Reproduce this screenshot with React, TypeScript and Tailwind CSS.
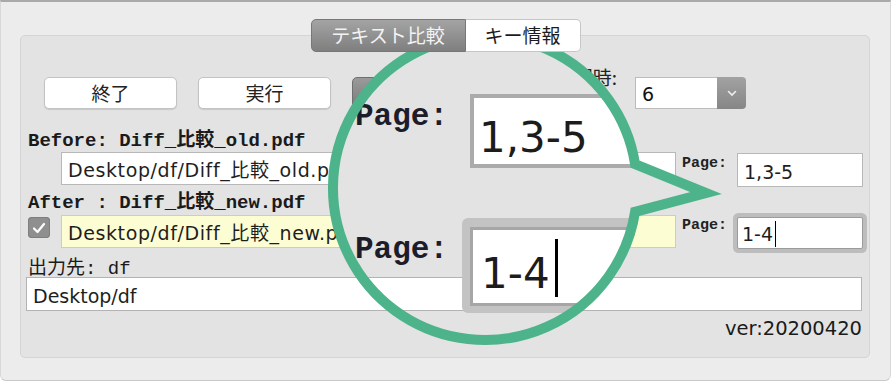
import React from 'react';

const sans = "font-['DejaVu_Sans','Noto_Sans_CJK_JP',sans-serif]";
const mono = "font-['Liberation_Mono','Noto_Sans_CJK_JP',monospace]";
const cjk = "font-['Noto_Sans_CJK_JP',sans-serif]";

const GREEN = '#4db38a';

const Button: React.FC<{ label?: string; dark?: boolean }> = ({ label, dark }) => (
  <div
    className={
      dark
        ? 'h-[32px] w-[133px] rounded-[5px] border border-[#6f6f6f] bg-gradient-to-b from-[#9a9a9a] to-[#7a7a7a]'
        : `flex h-[32px] w-[133px] items-center justify-center rounded-[5px] border border-[#c3c3c3] bg-white text-[19px] text-[#222] shadow-[0_1px_1px_rgba(0,0,0,0.12)] ${cjk}`
    }
  >
    {label}
  </div>
);

const Checkbox: React.FC = () => (
  <div className="mt-[2px] flex h-[21px] w-[22px] shrink-0 items-center justify-center rounded-[4px] bg-[#8f8f8f] shadow-[inset_0_0_0_1px_#7e7e7e]">
    <svg width="14" height="12" viewBox="0 0 14 12">
      <path d="M2 6.5 L5.5 10 L12 2" fill="none" stroke="white" strokeWidth="2.2" strokeLinecap="round" strokeLinejoin="round" />
    </svg>
  </div>
);

const PageLabel: React.FC<{ top: string }> = ({ top }) => (
  <div className={`ml-[6px] ${top} text-[15px] leading-[15px] font-bold text-[#222] ${mono}`}>Page:</div>
);

export default function App() {
  return (
    <div className="relative h-[383px] w-[891px] overflow-hidden bg-white">
      <div className="flex h-[381px] flex-col rounded-b-[6px] border-x border-b border-t-2 border-x-[#d8d8d8] border-b-[#c9c9c9] border-t-[#a9a9a9] bg-[#ececec]">
        {/* tabs */}
        <div className="relative z-10 mt-[17px] flex justify-center">
          <div className={`flex h-[33px] text-[19px] ${cjk}`}>
            <div className="flex w-[155px] items-center justify-center rounded-l-[5px] border border-[#777] bg-gradient-to-b from-[#a4a4a4] to-[#7f7f7f] text-[#f3f3f3]">
              テキスト比較
            </div>
            <div className="flex w-[115px] items-center justify-center rounded-r-[5px] border border-l-0 border-[#c6c6c6] bg-white text-[#1c1c1c]">
              キー情報
            </div>
          </div>
        </div>

        {/* group box */}
        <div className="ml-[19px] mt-[-17px] flex h-[323px] w-[850px] flex-col rounded-[5px] border border-[#d4d4d4] bg-[#e3e3e3]">
          <div className="mt-[41px] flex h-[32px] items-start pl-[23px] pr-[123px]">
            <div className="flex gap-[21px]">
              <Button label="終了" />
              <Button label="実行" />
              <Button dark />
            </div>
            <div className="ml-auto flex items-start">
              <div className={`mr-[18px] mt-[-10px] text-[19px] leading-[19px] text-[#222] ${cjk}`}>処理時:</div>
              <div className="flex h-[32px] w-[111px]">
                <div className={`flex w-[82px] items-center border border-r-0 border-[#bcbcbc] bg-white pl-[6px] pt-[3px] text-[19px] text-[#111] ${sans}`}>
                  6
                </div>
                <div className="flex w-[29px] items-center justify-center rounded-r-[4px] bg-gradient-to-b from-[#a2a2a2] to-[#868686]">
                  <svg width="10" height="7" viewBox="0 0 10 7">
                    <path d="M1.5 1.5 L5 5 L8.5 1.5" fill="none" stroke="#eee" strokeWidth="1.6" strokeLinecap="round" />
                  </svg>
                </div>
              </div>
            </div>
          </div>

          <div className={`mt-[23px] h-[20px] whitespace-nowrap pl-[7px] text-[19px] leading-[19px] font-bold text-[#1a1a1a] ${mono}`}>
            Before: Diff_比較_old.pdf
          </div>

          <div className="flex h-[35px] items-start pl-[40px]">
            <div className={`flex h-[33px] w-[615px] items-center overflow-hidden whitespace-nowrap border border-[#b8b8b8] bg-white pl-[6px] pt-[4px] text-[19px] tracking-[0.6px] text-[#1e1e1e] ${sans}`}>
              Desktop/df/Diff_比較_old.pdf
            </div>
            <PageLabel top="mt-[4px]" />
            <div className={`ml-[10px] mt-[1px] flex h-[34px] w-[126px] items-center border border-[#b8b8b8] bg-white pl-[6px] pt-[4px] text-[19px] text-[#1e1e1e] ${sans}`}>
              1,3-5
            </div>
          </div>

          <div className={`mt-[7px] h-[20px] whitespace-nowrap pl-[7px] text-[19px] leading-[19px] font-bold text-[#1a1a1a] ${mono}`}>
            After : Diff_比較_new.pdf
          </div>

          <div className="mt-[1px] flex h-[34px] items-start pl-[7px]">
            <Checkbox />
            <div className={`ml-[11px] flex h-[33px] w-[615px] items-center overflow-hidden whitespace-nowrap border border-[#cfcfb8] bg-[#fdfdd4] pl-[6px] pt-[4px] text-[19px] tracking-[0.6px] text-[#1e1e1e] ${sans}`}>
              Desktop/df/Diff_比較_new.pdf
            </div>
            <PageLabel top="mt-[3px]" />
            <div className={`ml-[10px] mt-[2px] flex h-[32px] w-[126px] items-center rounded-[2px] border border-[#9c9c9c] bg-white pl-[4px] pt-[2px] text-[19px] text-[#1e1e1e] shadow-[0_0_0_4px_#bdbdbd] ${sans}`}>
              1-4
              <span className="ml-[2px] inline-block h-[26px] w-[1px] bg-black" />
            </div>
          </div>

          <div className="mt-[7px] h-[20px] whitespace-nowrap pl-[7px] text-[19px] leading-[19px] text-[#1a1a1a]">
            <span className={cjk}>出力先</span>
            <span className={mono}>: df</span>
          </div>

          <div className={`ml-[5px] mt-[1px] flex h-[34px] w-[836px] items-center border border-[#b3b3b3] bg-white pl-[6px] pt-[5px] text-[19px] text-[#1e1e1e] ${sans}`}>
            Desktop/df
          </div>

          <div className={`mt-[8px] pr-[7px] text-right text-[19.5px] leading-[20px] text-[#1a1a1a] ${sans}`}>ver:20200420</div>
        </div>
      </div>

      {/* magnifier callout: tail fill */}
      <svg className="pointer-events-none absolute left-0 top-0" width="891" height="383">
        <polygon points="620,158 706,193 620,218" fill="#e3e3e3" />
      </svg>

      {/* magnified content */}
      <div className="pointer-events-none absolute left-[333px] top-[36px] h-[304px] w-[304px] overflow-hidden rounded-full">
        <div className="absolute inset-x-0 top-0 h-[239px] bg-[#e3e3e3]" />
        <div className={`absolute left-[22px] top-[65px] text-[31px] leading-[31px] font-bold text-[#1c1c2a] ${mono}`}>Page:</div>
        <div className="absolute left-[137px] top-[58px] h-[74px] w-[300px] border-[4px] border-[#ababab] bg-white" />
        <div className={`absolute left-[146px] top-[80px] text-[42px] leading-[43px] text-[#1c1c1c] ${sans}`}>1,3-5</div>
        <div className={`absolute left-[22px] top-[198px] text-[31px] leading-[31px] font-bold text-[#1c1c2a] ${mono}`}>Page:</div>
        <div className="absolute left-[129px] top-[182px] h-[95px] w-[300px] rounded-[6px] bg-[#c3c3c3] pl-[8px] pt-[9px]">
          <div className="h-[79px] w-[300px] border-[3px] border-[#a6a6a6] bg-white" />
        </div>
        <div className={`absolute left-[148px] top-[216px] text-[42px] leading-[43px] text-[#1c1c1c] ${sans}`}>1-4</div>
        <div className="absolute left-[222px] top-[203px] h-[58px] w-[3px] bg-black" />
      </div>

      {/* magnifier ring */}
      <svg className="pointer-events-none absolute left-0 top-0" width="891" height="383">
        <path
          d="M635.1 164.2 L706 193 L635.1 211.8 A152 152 0 1 1 635.1 164.2 Z"
          fill="none"
          stroke={GREEN}
          strokeWidth="10"
          strokeLinejoin="miter"
        />
      </svg>
    </div>
  );
}
